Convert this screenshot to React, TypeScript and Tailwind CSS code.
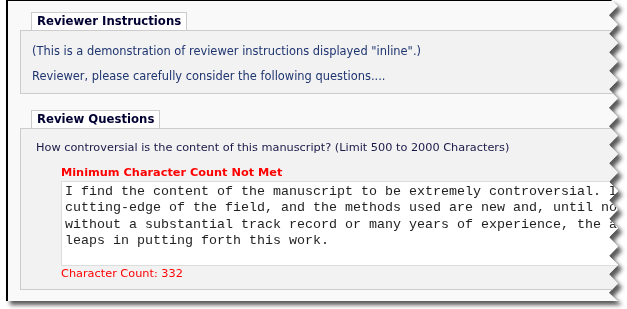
import React from 'react'

const PAPER_H = 301

// torn right edge, points computed from a simple zigzag
function tornEdge() {
  const inner = 603
  const outer = 612
  const step = 18.5
  const pts: string[] = ['0px 0px', `${inner + 2}px 0px`]
  for (let y = 6; y < PAPER_H + step; y += step) {
    pts.push(`${outer}px ${Math.min(y, PAPER_H)}px`)
    pts.push(`${inner}px ${Math.min(y + step / 2, PAPER_H)}px`)
  }
  pts.push(`${outer}px ${PAPER_H}px`)
  pts.push(`0px ${PAPER_H}px`)
  return `polygon(${pts.join(', ')})`
}

const uiFont = { fontFamily: '"DejaVu Sans", Verdana, sans-serif' }

function Legend({ children }: { children: React.ReactNode }) {
  return (
    <div className="ml-[11px] flex h-[19px] w-fit items-center border border-[#cccccc] bg-white px-[5px] text-[11.7px] leading-none font-bold text-[#000033]">
      {children}
    </div>
  )
}

export default function App() {
  const lines = [
    'I find the content of the manuscript to be extremely controversial. It is at the',
    'cutting-edge of the field, and the methods used are new and, until now, untested',
    'without a substantial track record or many years of experience, the authors took',
    'leaps in putting forth this work.',
  ]

  return (
    <div className="h-[309px] w-[627px] overflow-hidden bg-white pl-[6px]" style={uiFont}>
      <div className="w-[614px] drop-shadow-[4px_4px_2px_rgba(0,0,0,0.65)]">
        <div
          className="h-[301px] w-[614px] overflow-hidden border-l-2 border-t border-black bg-[#f9f9f9] pt-[11px]"
          style={{ clipPath: tornEdge() }}
        >
          {/* Reviewer Instructions */}
          <div className="ml-[12px] w-[660px]">
            <Legend>Reviewer Instructions</Legend>
            <div className="-mt-px border border-[#cccccc] bg-[#f2f2f2] pt-[8px] pb-[4px] pl-[11px] text-[11.45px] leading-[25px] text-[#1f3570]">
              <p>(This is a demonstration of reviewer instructions displayed "inline".)</p>
              <p>Reviewer, please carefully consider the following questions....</p>
            </div>
          </div>

          {/* Review Questions */}
          <div className="mt-[16px] ml-[12px] w-[660px]">
            <Legend>Review Questions</Legend>
            <div className="-mt-px border border-[#cccccc] bg-[#f2f2f2] pt-[11px] pb-[7px] pl-[15px] text-[11.3px] leading-[16px]">
              <p className="text-[#1a1846]">How controversial is the content of this manuscript? (Limit 500 to 2000 Characters)</p>
              <div className="mt-[9px] pl-[25px]">
                <p className="font-bold text-[#ff0000]">Minimum Character Count Not Met</p>
                <div
                  className="h-[85px] overflow-hidden border border-[#dddddd] bg-white pt-[2px] pl-[3px] text-[13.333px] leading-[16.3px] whitespace-pre text-[#222222]"
                  style={{ fontFamily: '"Liberation Mono", "Courier New", monospace' }}
                >
                  {lines.map((l) => (
                    <div key={l}>{l}</div>
                  ))}
                </div>
                <p className="text-[#ff0000]">Character Count: 332</p>
              </div>
            </div>
          </div>
        </div>
      </div>
    </div>
  )
}
